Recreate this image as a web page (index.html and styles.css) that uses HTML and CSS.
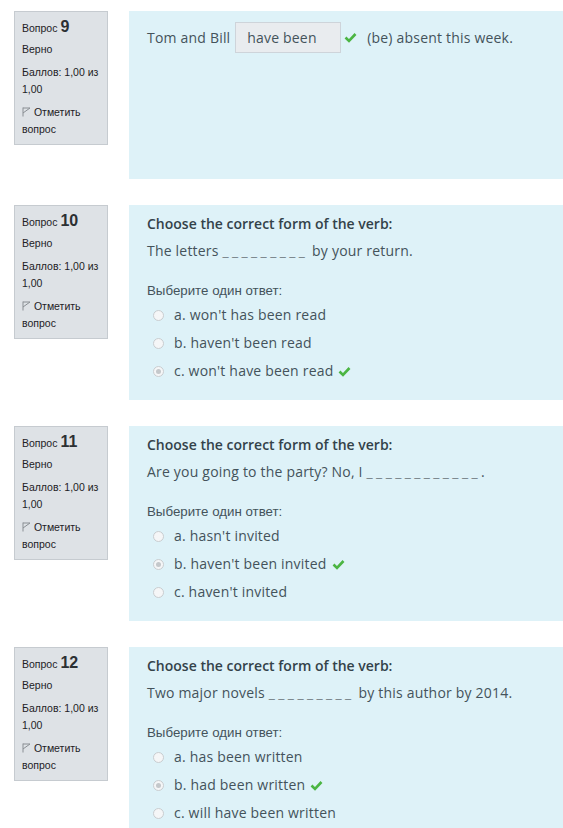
FILE: index.html
```html
<!DOCTYPE html>
<html lang="ru">
<head>
<meta charset="utf-8">
<title>Quiz review</title>
<link rel="stylesheet" href="styles.css">
</head>
<body>
<div class="page">

  <div class="que">
    <div class="info">
      <h3 class="qtitle">Вопрос <span class="qno">9</span></h3>
      <div class="state">Верно</div>
      <div class="grade">Баллов: 1,00 из 1,00</div>
      <div class="flag"><svg class="flagicon" width="9" height="10" viewBox="0 0 9 10"><path d="M1 0.5V9.5M1 1H8L1 6" fill="none" stroke="#8a8f94" stroke-width="1"/></svg> Отметить вопрос</div>
    </div>
    <div class="content content-tall">
      <div class="qtext inline">Tom and Bill <span class="answer-input">have been</span> <svg class="check" width="13" height="11" viewBox="0 0 13 11"><path d="M1.5 5.5L5 9L11.5 2" fill="none" stroke="#4bb543" stroke-width="2.6"/></svg> <span class="after">(be) absent this week.</span></div>
    </div>
  </div>

  <div class="que">
    <div class="info">
      <h3 class="qtitle">Вопрос <span class="qno">10</span></h3>
      <div class="state">Верно</div>
      <div class="grade">Баллов: 1,00 из 1,00</div>
      <div class="flag"><svg class="flagicon" width="9" height="10" viewBox="0 0 9 10"><path d="M1 0.5V9.5M1 1H8L1 6" fill="none" stroke="#8a8f94" stroke-width="1"/></svg> Отметить вопрос</div>
    </div>
    <div class="content">
      <div class="ctitle">Choose the correct form of the verb:</div>
      <div class="qtext">The letters <span class="blank">_________</span> by your return.</div>
      <div class="prompt">Выберите один ответ:</div>
      <div class="answers">
        <div class="opt"><span class="radio"></span>a. won't has been read</div>
        <div class="opt"><span class="radio"></span>b. haven't been read</div>
        <div class="opt"><span class="radio checked"></span>c. won't have been read <svg class="check" width="13" height="11" viewBox="0 0 13 11"><path d="M1.5 5.5L5 9L11.5 2" fill="none" stroke="#4bb543" stroke-width="2.6"/></svg></div>
      </div>
    </div>
  </div>

  <div class="que">
    <div class="info">
      <h3 class="qtitle">Вопрос <span class="qno">11</span></h3>
      <div class="state">Верно</div>
      <div class="grade">Баллов: 1,00 из 1,00</div>
      <div class="flag"><svg class="flagicon" width="9" height="10" viewBox="0 0 9 10"><path d="M1 0.5V9.5M1 1H8L1 6" fill="none" stroke="#8a8f94" stroke-width="1"/></svg> Отметить вопрос</div>
    </div>
    <div class="content">
      <div class="ctitle">Choose the correct form of the verb:</div>
      <div class="qtext">Are you going to the party? No, I <span class="blank">____________</span>.</div>
      <div class="prompt">Выберите один ответ:</div>
      <div class="answers">
        <div class="opt"><span class="radio"></span>a. hasn't invited</div>
        <div class="opt"><span class="radio checked"></span>b. haven't been invited <svg class="check" width="13" height="11" viewBox="0 0 13 11"><path d="M1.5 5.5L5 9L11.5 2" fill="none" stroke="#4bb543" stroke-width="2.6"/></svg></div>
        <div class="opt"><span class="radio"></span>c. haven't invited</div>
      </div>
    </div>
  </div>

  <div class="que">
    <div class="info">
      <h3 class="qtitle">Вопрос <span class="qno">12</span></h3>
      <div class="state">Верно</div>
      <div class="grade">Баллов: 1,00 из 1,00</div>
      <div class="flag"><svg class="flagicon" width="9" height="10" viewBox="0 0 9 10"><path d="M1 0.5V9.5M1 1H8L1 6" fill="none" stroke="#8a8f94" stroke-width="1"/></svg> Отметить вопрос</div>
    </div>
    <div class="content">
      <div class="ctitle">Choose the correct form of the verb:</div>
      <div class="qtext">Two major novels <span class="blank">_________</span> by this author by 2014.</div>
      <div class="prompt">Выберите один ответ:</div>
      <div class="answers">
        <div class="opt"><span class="radio"></span>a. has been written</div>
        <div class="opt"><span class="radio checked"></span>b. had been written <svg class="check" width="13" height="11" viewBox="0 0 13 11"><path d="M1.5 5.5L5 9L11.5 2" fill="none" stroke="#4bb543" stroke-width="2.6"/></svg></div>
        <div class="opt"><span class="radio"></span>c. will have been written</div>
      </div>
    </div>
  </div>

</div>
</body>
</html>
```

FILE: styles.css
```css
html, body {
  margin: 0;
  padding: 0;
  background: #ffffff;
}
.page {
  padding: 11px 0 0 14px;
  overflow: hidden;
}
.que {
  display: flex;
  align-items: flex-start;
  margin-bottom: 26px;
}
.info {
  width: 78px;
  flex: none;
  box-sizing: content-box;
  padding: 5px 7px 6px 7px;
  background: #dee2e6;
  border: 1px solid #c6cbd0;
  font-family: "Liberation Sans", Arial, sans-serif;
  font-size: 10.5px;
  line-height: 17px;
  color: #1d2125;
}
.qtitle {
  margin: 0;
  font-size: 10.5px;
  font-weight: normal;
  line-height: 20px;
}
.qno {
  font-size: 16px;
  font-weight: bold;
  color: #2c3033;
}
.state {
  margin-top: 3px;
}
.grade {
  margin-top: 6px;
}
.flag {
  margin-top: 6px;
}
.flagicon {
  vertical-align: -1px;
}
.content {
  flex: 1;
  margin-left: 21px;
  background: #def2f8;
  padding: 9px 18px 19px 18px;
  font-family: "Open Sans", sans-serif;
  font-size: 14px;
  line-height: 20px;
  color: #44535b;
}
.content-tall {
  min-height: 168px;
  box-sizing: border-box;
  padding-top: 11px;
}
.qtext.inline {
  display: flex;
  align-items: center;
  white-space: pre;
  margin-top: 0;
}
.answer-input {
  display: inline-block;
  box-sizing: border-box;
  width: 106px;
  height: 31px;
  line-height: 29px;
  padding: 0 11px;
  margin-left: 1px;
  background: #e9ecef;
  border: 1px solid #ced4da;
  letter-spacing: 0.2px;
}
.inline .check {
  margin-left: 3px;
  margin-right: 10px;
}
.ctitle {
  font-weight: 600;
  color: #33424a;
}
.qtext {
  margin-top: 7px;
  letter-spacing: 0.2px;
}
.blank {
  letter-spacing: 3.4px;
  color: #7a868c;
}
.prompt {
  margin-top: 20px;
  font-family: "Liberation Sans", Arial, sans-serif;
  font-size: 13.3px;
}
.answers {
  margin-top: 4px;
}
.opt {
  display: flex;
  align-items: center;
  margin-top: 8px;
  padding-left: 6px;
  letter-spacing: 0.2px;
}
.opt:first-child {
  margin-top: 0;
}
.opt .check {
  margin-left: 5px;
}
.radio {
  width: 9px;
  height: 9px;
  border: 1px solid #c9cdd0;
  border-radius: 50%;
  background: #f5f6f7;
  margin-right: 10px;
  position: relative;
  flex: none;
}
.radio.checked::after {
  content: "";
  position: absolute;
  left: 2px;
  top: 2px;
  width: 5px;
  height: 5px;
  border-radius: 50%;
  background: #c4c8cb;
}
```
